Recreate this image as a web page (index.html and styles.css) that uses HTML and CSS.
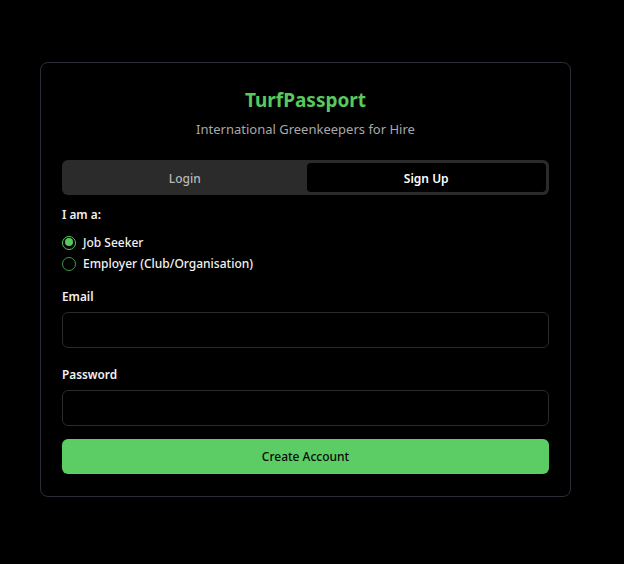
FILE: index.html
```html
<!DOCTYPE html>
<html>
<head>
<meta charset="utf-8">
<link rel="stylesheet" href="styles.css">
</head>
<body>
<div class="page">
  <div class="card">
    <h1 class="title">TurfPassport</h1>
    <p class="subtitle">International Greenkeepers for Hire</p>
    <div class="tabs">
      <div class="tab">Login</div>
      <div class="tab active">Sign Up</div>
    </div>
    <div class="label role-label">I am a:</div>
    <div class="radios">
      <div class="radio-row"><span class="radio checked"></span><span>Job Seeker</span></div>
      <div class="radio-row"><span class="radio"></span><span>Employer (Club/Organisation)</span></div>
    </div>
    <div class="label field-label">Email</div>
    <div class="input"></div>
    <div class="label field-label">Password</div>
    <div class="input"></div>
    <div class="button">Create Account</div>
  </div>
</div>
</body>
</html>
```

FILE: styles.css
```css
html, body {
  margin: 0;
  padding: 0;
  background: #000;
}
body {
  font-family: "Noto Sans", "Open Sans", sans-serif;
  color: #fff;
}
.page {
  padding: 62px 0 0 40px;
}
.card {
  width: 531px;
  box-sizing: border-box;
  border: 1px solid #2c2f38;
  border-radius: 8px;
  padding: 23px 21px 22px;
  display: flex;
  flex-direction: column;
}
.title {
  margin: 0;
  font-size: 19px;
  line-height: 28px;
  font-weight: 700;
  color: #58c95d;
  text-align: center;
}
.subtitle {
  margin: 5px 0 0;
  font-size: 13px;
  line-height: 20px;
  color: #a8a8a8;
  text-align: center;
}
.tabs {
  margin-top: 21px;
  height: 35px;
  box-sizing: border-box;
  padding: 3px;
  background: #2b2b2b;
  border-radius: 6px;
  display: grid;
  grid-template-columns: 1fr 1fr;
  gap: 2px;
}
.tab {
  display: flex;
  align-items: center;
  justify-content: center;
  padding-top: 1px;
  font-size: 12px;
  font-weight: 500;
  color: #b9b9b9;
  border-radius: 4px;
}
.tab.active {
  background: #000;
  color: #fff;
  font-weight: 600;
}
.label {
  font-size: 11.8px;
  line-height: 20px;
  font-weight: 600;
  color: #f2f2f2;
}
.role-label {
  margin-top: 9px;
}
.radios {
  margin-top: 8px;
  display: flex;
  flex-direction: column;
}
.radio-row {
  height: 21px;
  display: flex;
  align-items: center;
  gap: 7px;
  font-size: 12px;
  font-weight: 500;
  color: #f2f2f2;
}
.radio {
  width: 14px;
  height: 14px;
  box-sizing: border-box;
  border: 1.5px solid #3f9a45;
  border-radius: 50%;
  position: relative;
  flex: none;
}
.radio.checked {
  border-color: #58c95d;
}
.radio.checked::after {
  content: "";
  position: absolute;
  left: 1.5px;
  top: 1.5px;
  width: 8px;
  height: 8px;
  border-radius: 50%;
  background: #58c95d;
}
.field-label {
  margin-top: 12px;
}
.field-label + .input {
  margin-top: 6px;
}
.input + .field-label {
  margin-top: 16px;
}
.input {
  height: 36px;
  box-sizing: border-box;
  border: 1px solid #2a2a2e;
  border-radius: 6px;
  background: #000;
}
.button {
  margin-top: 13px;
  height: 35px;
  border-radius: 6px;
  background: #5bcd64;
  color: #0a0a0a;
  font-size: 12px;
  font-weight: 500;
  display: flex;
  align-items: center;
  justify-content: center;
}
```
